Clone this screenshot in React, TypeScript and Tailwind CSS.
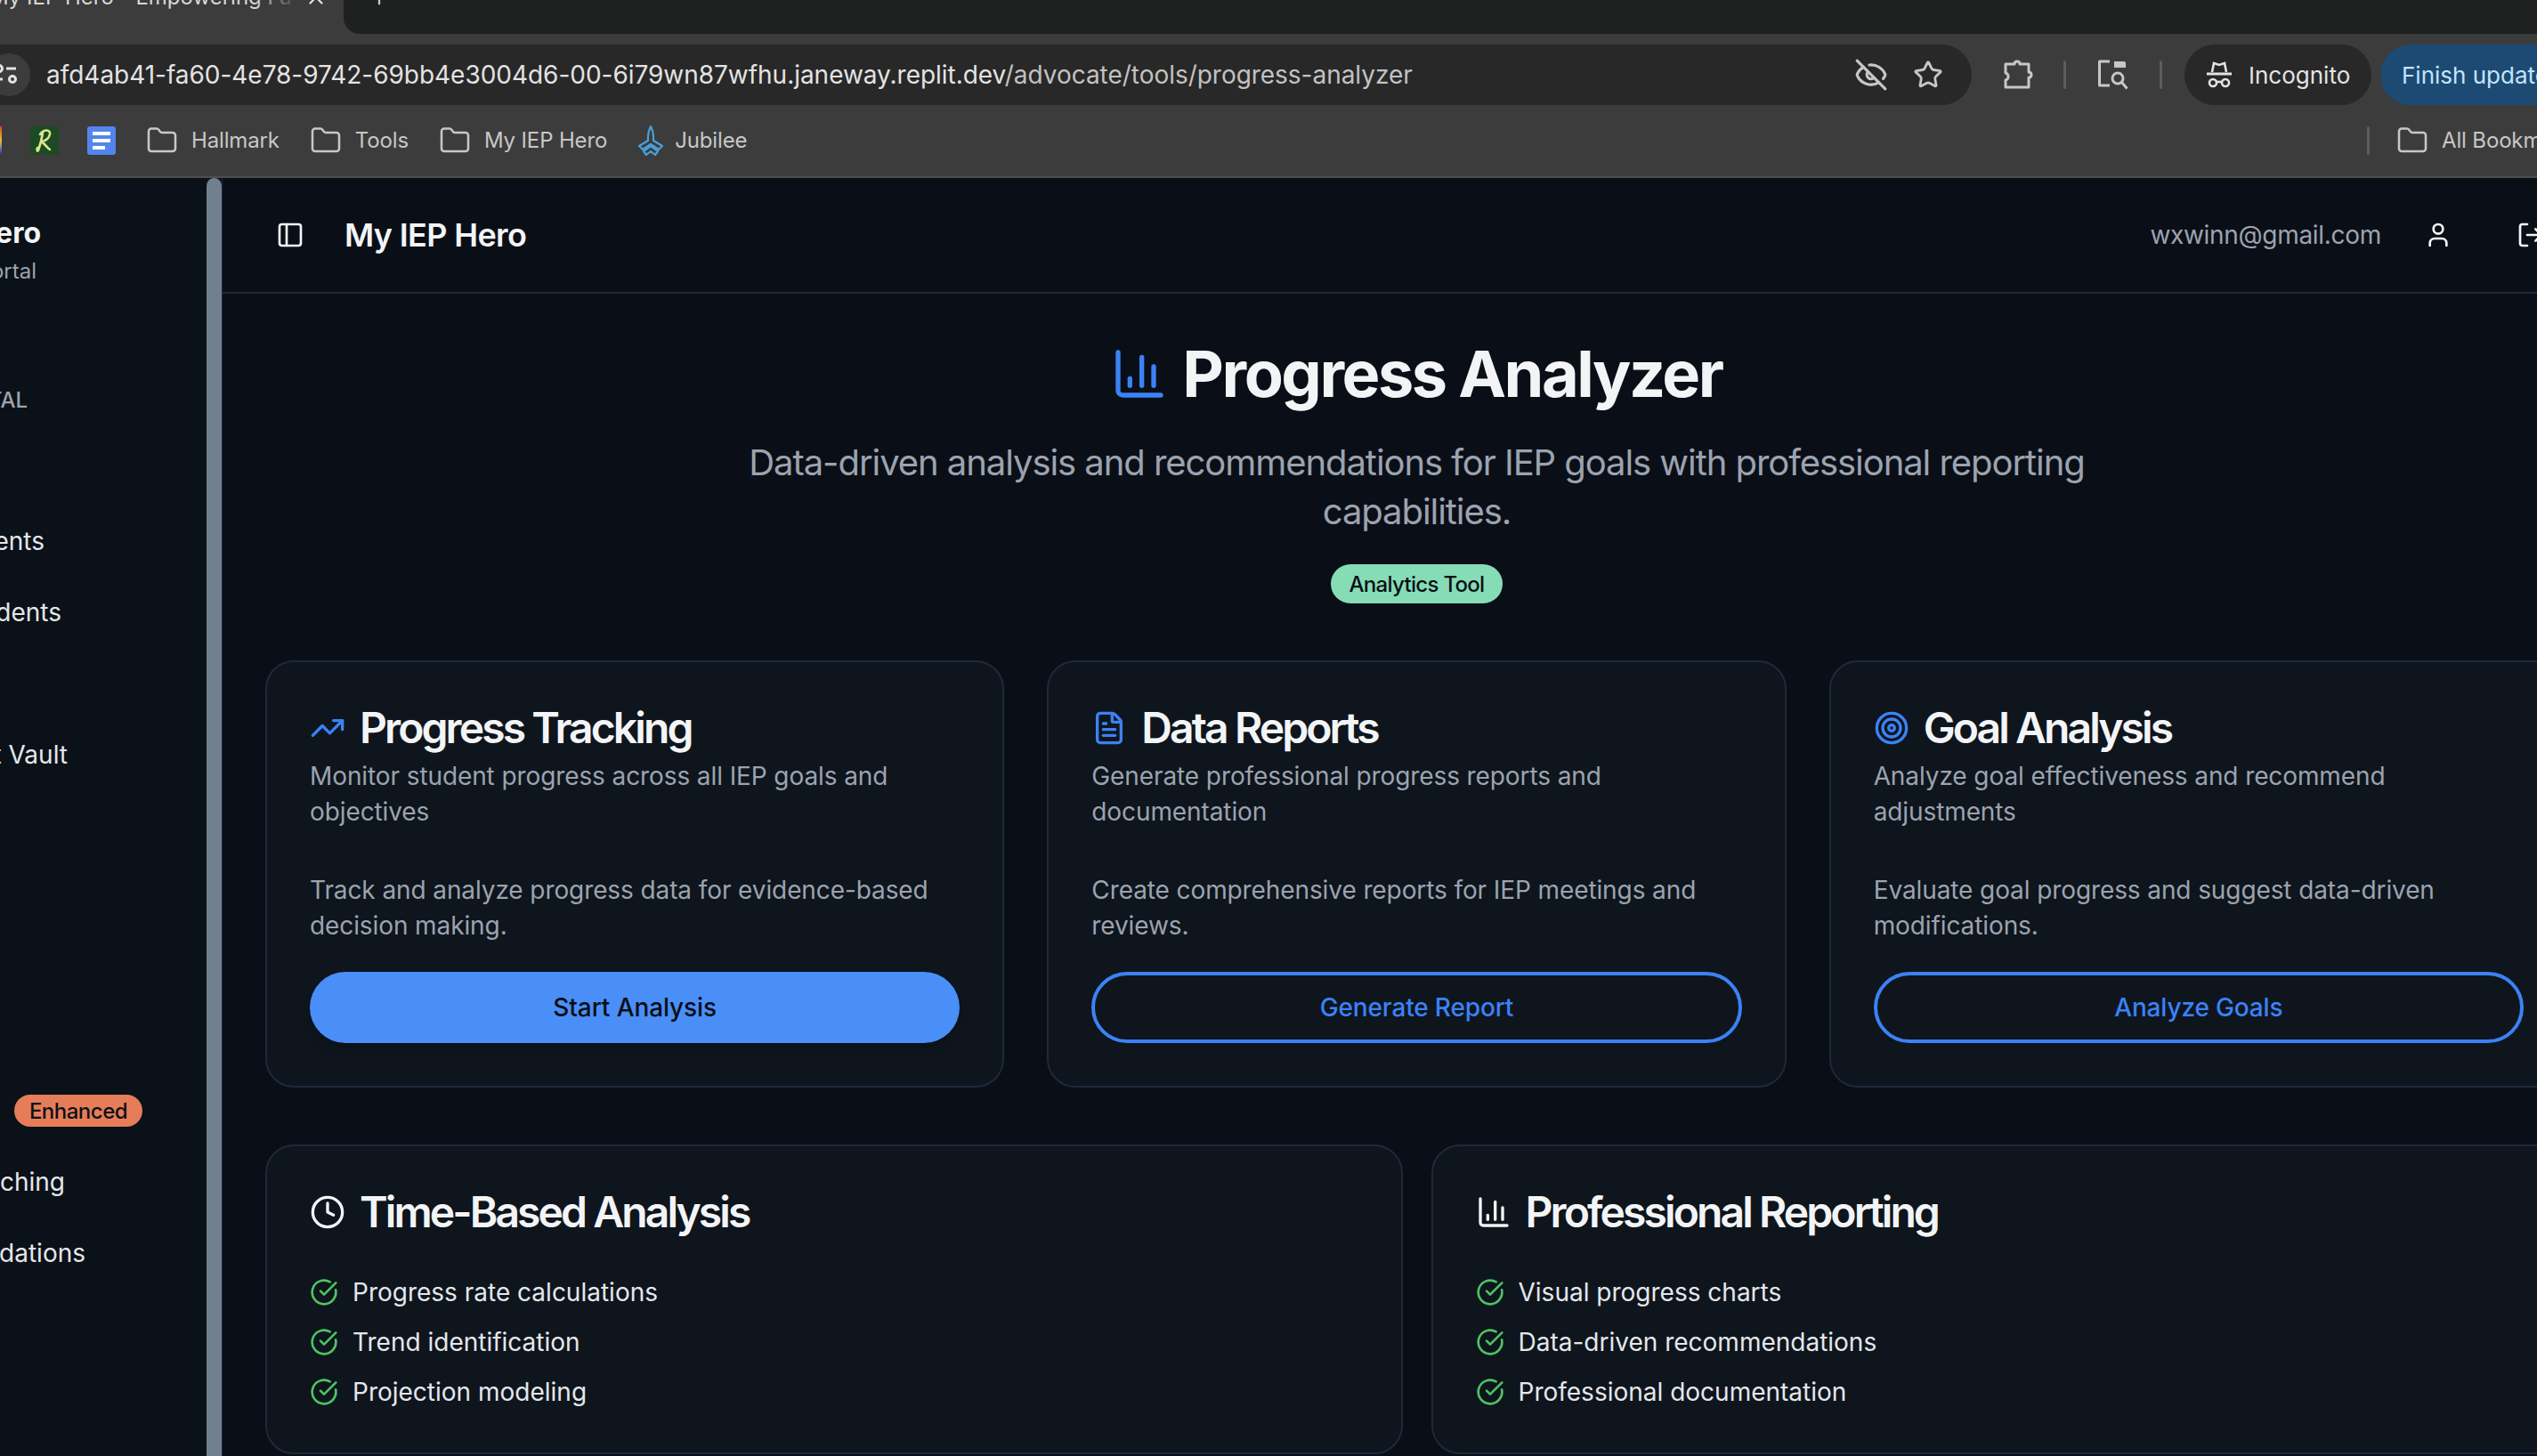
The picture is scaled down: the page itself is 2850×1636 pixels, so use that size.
import { BarChart3, CircleCheckBig, Clock, EyeOff, FileText, Folder, LogOut, PanelLeft, Plus, Star, Target, TrendingUp, User, X } from "lucide-react";
import type { ReactNode } from "react";

// browser chrome glyphs that the icon packs don't carry
function TuneIcon() {
  return (
    <svg width="30" height="30" viewBox="0 0 30 30" fill="none" stroke="#e3e3e3" strokeWidth="3">
      <circle cx="4" cy="8" r="3.5" />
      <path d="M12 8h11" />
      <path d="M0 20h8" />
      <circle cx="19" cy="20" r="3.5" />
    </svg>
  );
}

function PuzzleIcon() {
  return (
    <svg width="34" height="34" viewBox="0 0 34 34" fill="none" stroke="#c7c7c7" strokeWidth="3" strokeLinejoin="round">
      <path d="M3 5h10c0-4 6-4 6 0h10v9c4 0 4 6 0 6v11H3v-8c4-1 4-7 0-8z" />
    </svg>
  );
}

function TabSearchIcon() {
  return (
    <svg width="36" height="34" viewBox="0 0 36 34" fill="none">
      <path d="M14 2H2.500v27H14" stroke="#c7c7c7" strokeWidth="3" strokeLinejoin="round" />
      <path d="M2.500 2H30a2 2 0 0 1 2 2v5H19V2z" fill="#c7c7c7" />
      <circle cx="23" cy="21" r="6" stroke="#c7c7c7" strokeWidth="3" />
      <path d="m27.500 25.500 6 7" stroke="#c7c7c7" strokeWidth="3" />
    </svg>
  );
}

function IncognitoIcon() {
  return (
    <svg width="30" height="30" viewBox="0 0 30 30" fill="none" stroke="#e3e3e3" strokeWidth="2.600">
      <path d="M7 12 9 2l6 2 6-2 2 10" />
      <path d="M1 14h28" strokeWidth="3" />
      <circle cx="8" cy="24" r="4" />
      <circle cx="22" cy="24" r="4" />
      <path d="M12 23h6" />
    </svg>
  );
}

function JubileeIcon() {
  return (
    <svg width="30" height="34" viewBox="0 0 30 34" fill="none" stroke="#4b9fd8" strokeWidth="2.200" strokeLinejoin="round">
      <path d="M15 1c-2 4-3 7-3 11v5l-10 6 4 4 9-6 9 6 4-4-10-6v-5c0-4-1-7-3-11z" />
      <path d="m15 23-8 6 3 4 5-4 5 4 3-4z" />
    </svg>
  );
}

function ScriptRIcon() {
  return (
    <svg width="32" height="32" viewBox="0 0 32 32" fill="none" stroke="#d9e68c" strokeWidth="2.600" strokeLinecap="round">
      <path d="M14 7c-1 7-3 14-5 20-1 2-2-1-1-3" />
      <path d="M11 9c4-6 12-6 11 0-1 5-6 8-10 8 4 2 7 7 10 9" />
    </svg>
  );
}

function BookmarkFolder({ label }: { label: string }) {
  return (
    <div className="flex shrink-0 items-center gap-[15px] whitespace-nowrap">
      <Folder size={36} strokeWidth={1.7} className="shrink-0 text-[#c7c7c7]" />
      <span className="text-[24px] tracking-[-0.150px] text-[#c7c7c7]">{label}</span>
    </div>
  );
}

function BrowserChrome() {
  return (
    <div className="bg-[#3c3c3c] h-[200px] border-b-2 border-[#4e4e4e]">
      {/* tab strip, cut by the top edge of the capture */}
      <div className="flex h-[38px] overflow-hidden">
        <div className="relative w-[386px] shrink-0 overflow-hidden">
          <div className="-mt-[21px] -ml-[12px] flex items-center whitespace-nowrap text-[24px] leading-[36px] text-[#d8d8d8]">
            My IEP Hero - Empowering Fa
          </div>
          <div className="absolute left-[285px] top-0 h-[16px] w-[50px] bg-gradient-to-r from-transparent to-[#3c3c3c]" />
          <X size={26} strokeWidth={2} className="absolute left-[342px] -top-[16px] text-[#e3e3e3]" />
        </div>
        <div className="flex-1 rounded-bl-[18px] bg-[#1f2120] pl-[26px]">
          <Plus size={28} strokeWidth={2} className="-mt-[18px] text-[#c7c7c7]" />
        </div>
      </div>

      {/* address bar row */}
      <div className="mt-[12px] flex h-[68px] items-center">
        <div className="-ml-[34px] flex h-full w-[2249px] shrink-0 items-center rounded-full bg-[#282828] pr-[32px]">
          <div className="ml-[20px] flex h-[48px] w-[48px] items-center justify-center rounded-full bg-[#3c3c3c]">
            <TuneIcon />
          </div>
          <div className="ml-[18px] whitespace-nowrap text-[28px] tracking-[-0.03px] text-[#e3e3e3]">
            afd4ab41-fa60-4e78-9742-69bb4e3004d6-00-6i79wn87wfhu.janeway.replit.dev
            <span className="text-[#c2c2c2]">/advocate/tools/progress-analyzer</span>
          </div>
          <div className="ml-auto flex items-center gap-[28px]">
            <EyeOff size={38} strokeWidth={2} className="text-[#c7c7c7]" />
            <Star size={34} strokeWidth={2} className="text-[#c7c7c7]" />
          </div>
        </div>
        <div className="ml-[35px] flex items-center">
          <PuzzleIcon />
          <div className="ml-[34px] h-[32px] w-[3px] rounded bg-[#5d5d5d]" />
          <div className="ml-[35px]">
            <TabSearchIcon />
          </div>
          <div className="ml-[34px] h-[32px] w-[3px] rounded bg-[#5d5d5d]" />
        </div>
        <div className="ml-[25px] flex h-full w-[210px] shrink-0 items-center gap-[18px] rounded-full bg-[#282828] pl-[24px]">
          <IncognitoIcon />
          <span className="text-[26px] text-[#e3e3e3]">Incognito</span>
        </div>
        <div className="ml-[10px] flex h-full w-[220px] shrink-0 items-center whitespace-nowrap rounded-l-full bg-[#1d4a72] pl-[24px] text-[26px] text-[#c2e4ff]">
          Finish update
        </div>
      </div>

      {/* bookmarks */}
      <div className="mt-[20px] flex h-[40px] items-center">
        <div className="h-[32px] w-[2px] bg-gradient-to-b from-[#d83a2a] via-[#e8c020] to-[#20309a]" />
        <div className="ml-[32px] h-[32px] w-[32px] bg-[#1c4a24]">
          <ScriptRIcon />
        </div>
        <div className="ml-[32px] flex h-[32px] w-[32px] flex-col items-center justify-center gap-[4px] rounded-[3px] bg-[#5385ee]">
          <div className="h-[4px] w-[20px] bg-white" />
          <div className="h-[4px] w-[20px] bg-white" />
          <div className="h-[4px] w-[14px] self-start ml-[6px] bg-white" />
        </div>
        <div className="ml-[34px] flex items-center gap-[34px]">
          <BookmarkFolder label="Hallmark" />
          <BookmarkFolder label="Tools" />
          <BookmarkFolder label="My IEP Hero" />
          <div className="flex items-center gap-[12px]">
            <JubileeIcon />
            <span className="text-[24px] tracking-[-0.150px] text-[#c7c7c7]">Jubilee</span>
          </div>
        </div>
        <div className="ml-auto flex items-center">
          <div className="h-[32px] w-[3px] rounded bg-[#5d5d5d]" />
          <div className="ml-[30px] w-[158px] overflow-hidden">
            <BookmarkFolder label="All Bookmarks" />
          </div>
        </div>
      </div>
    </div>
  );
}

// sidebar is scrolled sideways in the capture, rows keep only their tail
function SideRow({ text, end, className }: { text: string; end: number; className: string }) {
  return (
    <div className={`flex justify-end whitespace-nowrap ${className}`} style={{ paddingRight: 232 - end }}>
      {text}
    </div>
  );
}

function Sidebar() {
  return (
    <div className="flex w-[250px] shrink-0 border-r border-[#1e293b] bg-[#0b1118]">
      <div className="w-[232px] shrink-0 overflow-hidden">
        <SideRow text="My IEP Hero" end={46} className="mt-[42px] text-[32px] font-bold leading-[40px] text-[#f3f4f6]" />
        <SideRow text="Advocate Portal" end={41} className="mt-[5px] text-[24px] leading-[36px] text-[#9ca3af]" />
        <SideRow text="PORTAL" end={31} className="mt-[109px] text-[24px] font-medium leading-[36px] text-[#9ca3af]" />
        <SideRow text="Documents" end={50} className="mt-[120px] text-[28px] leading-[40px] text-[#e5e7eb]" />
        <SideRow text="Students" end={69} className="mt-[40px] text-[28px] leading-[40px] text-[#e5e7eb]" />
        <SideRow text="Document Vault" end={76} className="mt-[120px] text-[28px] leading-[40px] text-[#e5e7eb]" />
        <div className="ml-[16px] mt-[362px] flex h-[36px] w-[144px] items-center justify-center rounded-full bg-[#e67d59] pt-[1px] text-[24px] font-medium tracking-[-0.500px] text-[#0b1118]">
          Enhanced
        </div>
        <SideRow text="Coaching" end={73} className="mt-[42px] text-[28px] leading-[40px] text-[#e5e7eb]" />
        <SideRow text="Recommendations" end={96} className="mt-[40px] text-[28px] leading-[40px] text-[#e5e7eb]" />
      </div>
      <div className="h-full w-[17px] rounded-t-full bg-[#708090]" />
    </div>
  );
}

function Card({ icon, title, children }: { icon: ReactNode; title: string; children: ReactNode }) {
  return (
    <div className="rounded-[32px] border-2 border-[#1e293b] bg-[#0e151d] p-[48px]">
      <div className="-mt-[2px] flex h-[56px] items-center gap-[16px]">
        {icon}
        <h2 className="text-[48px] font-semibold leading-[56px] tracking-[-2.900px] text-[#f3f4f6]">{title}</h2>
      </div>
      {children}
    </div>
  );
}

function ToolCard({ icon, title, desc, body, action, primary }: { icon: ReactNode; title: string; desc: string; body: string; action: string; primary?: boolean }) {
  return (
    <Card icon={icon} title={title}>
      <p className="mt-[6px] text-[28px] leading-[40px] tracking-[-0.100px] text-[#9ca3af]">{desc}</p>
      <p className="mt-[48px] text-[28px] leading-[40px] tracking-[-0.100px] text-[#9ca3af]">{body}</p>
      {primary ? (
        <button className="mt-[32px] h-[80px] w-full rounded-full bg-[#4a8ef8] text-[28px] font-medium tracking-[-0.100px] text-[#0a0f17] shadow-lg">{action}</button>
      ) : (
        <button className="mt-[32px] h-[80px] w-full rounded-full border-4 border-[#3b82f6] text-[28px] font-medium tracking-[-0.150px] text-[#3b82f6]">{action}</button>
      )}
    </Card>
  );
}

function FeatureCard({ icon, title, items }: { icon: ReactNode; title: string; items: string[] }) {
  return (
    <Card icon={icon} title={title}>
      <ul className="mt-[42px] flex flex-col gap-[16px]">
        {items.map((item) => (
          <li key={item} className="flex items-center gap-[16px] text-[28px] leading-[40px] text-[#e5e7eb]">
            <CircleCheckBig size={32} strokeWidth={2} className="text-[#4ec263]" />
            {item}
          </li>
        ))}
      </ul>
    </Card>
  );
}

export default function App() {
  return (
    <div className="flex h-[1636px] w-[2850px] flex-col overflow-hidden bg-[#0a0f17] font-[Inter,sans-serif]">
      <BrowserChrome />
      <div className="flex min-h-0 flex-1">
        <Sidebar />
        <main className="w-[2683px] shrink-0">
          <header className="flex h-[130px] items-center border-b-2 border-[#1e293b] pl-[60px] pr-[74px]">
            <PanelLeft size={32} strokeWidth={2} className="text-[#f3f4f6]" />
            <span className="ml-[45px] text-[36px] font-semibold tracking-[-0.650px] text-[#f3f4f6]">My IEP Hero</span>
            <span className="ml-auto text-[28px] tracking-[-0.300px] text-[#9ca3af]">wxwinn@gmail.com</span>
            <User size={32} strokeWidth={2} className="ml-[48px] text-[#f3f4f6]" />
            <LogOut size={32} strokeWidth={2} className="ml-[72px] text-[#f3f4f6]" />
          </header>

          <div className="px-[48px] pt-[50px]">
            <div className="flex flex-col items-center">
              <h1 className="flex h-[80px] items-center gap-[16px] text-[72px] font-bold tracking-[-2.450px] text-[#f3f4f6]">
                <BarChart3 size={64} strokeWidth={2} className="text-[#3b82f6]" />
                Progress Analyzer
              </h1>
              <p className="mt-[32px] w-[1536px] text-center text-[40px] leading-[55px] tracking-[-1.060px] text-[#9ca3af]">
                Data-driven analysis and recommendations for IEP goals with professional reporting capabilities.
              </p>
              <span className="mt-[32px] flex h-[44px] w-[193px] items-center justify-center rounded-full bg-[#86dcb5] pt-[1px] text-[24px] font-medium tracking-[-0.700px] text-[#0a0f17]">
                Analytics Tool
              </span>
            </div>

            <div className="mt-[64px] grid grid-cols-3 gap-[48px]">
              <ToolCard
                primary
                icon={<TrendingUp size={40} strokeWidth={2} className="text-[#3b82f6]" />}
                title="Progress Tracking"
                desc="Monitor student progress across all IEP goals and objectives"
                body="Track and analyze progress data for evidence-based decision making."
                action="Start Analysis"
              />
              <ToolCard
                icon={<FileText size={40} strokeWidth={2} className="text-[#3b82f6]" />}
                title="Data Reports"
                desc="Generate professional progress reports and documentation"
                body="Create comprehensive reports for IEP meetings and reviews."
                action="Generate Report"
              />
              <ToolCard
                icon={<Target size={40} strokeWidth={2} className="text-[#3b82f6]" />}
                title="Goal Analysis"
                desc="Analyze goal effectiveness and recommend adjustments"
                body="Evaluate goal progress and suggest data-driven modifications."
                action="Analyze Goals"
              />
            </div>

            <div className="mt-[64px] grid grid-cols-2 gap-[32px]">
              <FeatureCard
                icon={<Clock size={40} strokeWidth={2} className="text-[#f3f4f6]" />}
                title="Time-Based Analysis"
                items={["Progress rate calculations", "Trend identification", "Projection modeling"]}
              />
              <FeatureCard
                icon={<BarChart3 size={40} strokeWidth={2} className="text-[#f3f4f6]" />}
                title="Professional Reporting"
                items={["Visual progress charts", "Data-driven recommendations", "Professional documentation"]}
              />
            </div>
          </div>
        </main>
      </div>
    </div>
  );
}
